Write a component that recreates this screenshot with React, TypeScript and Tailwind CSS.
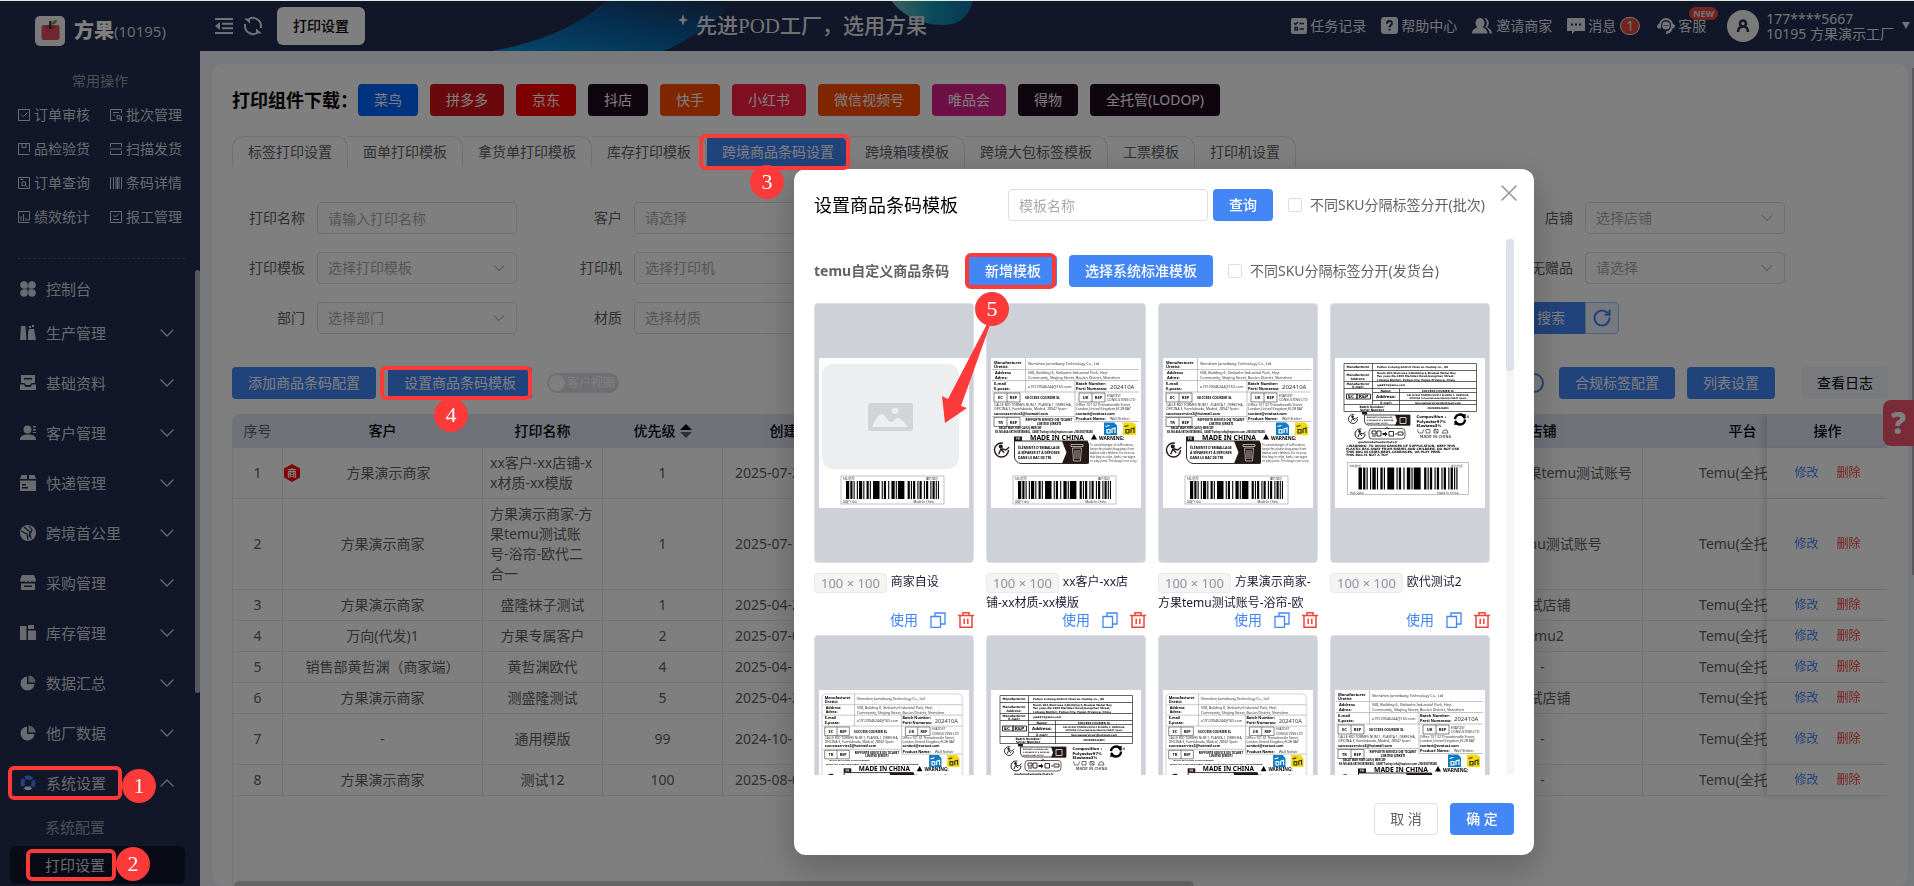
import React from 'react'
import { ChevronDown, ChevronUp, RotateCw, Search, X } from 'lucide-react'

type IconProps = { children: React.ReactNode; className?: string }

const Solid = ({ children, className = 'size-4' }: IconProps) => (
  <svg viewBox="0 0 16 16" fill="currentColor" className={className} aria-hidden="true">
    {children}
  </svg>
)

const Outline = ({ children, className = 'size-3' }: IconProps) => (
  <svg
    viewBox="0 0 12 12"
    fill="none"
    stroke="currentColor"
    strokeWidth="1"
    className={className}
    aria-hidden="true"
  >
    {children}
  </svg>
)

const shortcuts = [
  { name: '订单审核', icon: <path d="M.5.5h11v11H.5zM3 5.500l2.200 2.200L9.500 3.500" /> },
  { name: '批次管理', icon: <path d="M11.500 4V.5H.5v11H6M3 3.500h6M3 6h2M11.500 7v5M10 10.500l1.500 1M7 6.500h3v3.500H7z" /> },
  { name: '品检验货', icon: <path d="M11.500 9V.5H.5v11h11M4 .5V5l2-1 2 1V.5" /> },
  { name: '扫描发货', icon: <path d="M.5 4V.5h11V4M.5 8v3.500h11V8M0 6h12" /> },
  { name: '订单查询', icon: <path d="M.5.5h11v11H.5zM2.500 2.500h3M4 5h3.500v3.500H4zM7.500 8.500 9.500 10" /> },
  { name: '条码详情', icon: <path d="M.5 0v12M3.500 0v12M6 0v12M7.500 0v12M9 0v12M11.500 0v12" /> },
  { name: '绩效统计', icon: <path d="M11.500 9V.5H.5v11h11M3 10V5M5.500 10V3M8 10V7M10 10V8" /> },
  { name: '报工管理', icon: <path d="M.5.5h11v11H.5zM3.500 4l2 2 3.500-3.500M3 8.500h6" /> },
]

const pie = (
  <>
    <path d="M7 1.500A7 7 0 1 0 14.500 9H7z" />
    <path d="M8.500.5v7h7a7 7 0 0 0-7-7z" opacity=".8" />
  </>
)

const menu = [
  {
    name: '生产管理',
    icon: <path d="M1 1h4.500l1 14H0zM8 15V7l1-3h5l2 11zM9 1h2v2H9zM12 0h2v2h-2z" />,
  },
  {
    name: '基础资料',
    icon: <path d="M1 0h14v8h-3.500l-1.500 2H6L4.500 8H1zM4 3v1.500h8V3zM0 9.500h4L5.500 12h5L12 9.500h4V15H0z" fillRule="evenodd" />,
  },
  {
    name: '客户管理',
    icon: <path d="M3.500 4.500a4 4 0 1 1 8 0 4 4 0 0 1-8 0zM0 15c0-4 3-5.500 8-5.500s8 1.500 8 5.500zM13 1h3v1.500h-3zM13 4h3v1.500h-3zM13 7h3v1h-3z" />,
  },
  {
    name: '快递管理',
    icon: <path d="M1.500 0H7v4H0zM9 0h5.500L16 4H9zM0 5.500h16V16H0zM2 9v1.500h4V9zM2 12v1.500h6V12z" fillRule="evenodd" />,
  },
  {
    name: '跨境首公里',
    icon: (
      <>
        <circle cx="8" cy="8" r="8" />
        <path d="M1 6l6 3 1 6M4 2l6 5-1 5M9 1l3 4-2 4 1 5" fill="none" stroke="#222c50" strokeWidth="1.200" />
      </>
    ),
  },
  {
    name: '采购管理',
    icon: <path d="M2 0h12l2 5c0 2-3 2.500-4 1-1 1.500-3 1.500-4 0-1 1.500-3 1.500-4 0-1 1.500-4 1-4-1zM1 8.500h14V15H1zM4 10.500V12h8v-1.500z" fillRule="evenodd" />,
  },
  {
    name: '库存管理',
    icon: <path d="M0 1h6.500v14H0zM8 0h6v4H8zM8 5.500h8V15H8z" />,
  },
  { name: '数据汇总', icon: pie },
  { name: '他厂数据', icon: pie },
]

const downloads = [
  { name: '菜鸟', color: 'bg-[#0066ff]' },
  { name: '拼多多', color: 'bg-[#d4131b]' },
  { name: '京东', color: 'bg-[#fa0000]' },
  { name: '抖店', color: 'bg-[#1f0a1c]' },
  { name: '快手', color: 'bg-[#ff4a00]' },
  { name: '小红书', color: 'bg-[#ff2142]' },
  { name: '微信视频号', color: 'bg-[#ff4a00]' },
  { name: '唯品会', color: 'bg-[#d9208a]' },
  { name: '得物', color: 'bg-[#1f0a1c]' },
  { name: '全托管(LODOP)', color: 'bg-[#1f0a1c]' },
]

const tabs = [
  '标签打印设置',
  '面单打印模板',
  '拿货单打印模板',
  '库存打印模板',
  '跨境商品条码设置',
  '跨境箱唛模板',
  '跨境大包标签模板',
  '工票模板',
  '打印机设置',
]

const rows = [
  { customer: '方果演示商家', name: 'xx客户-xx店铺-xx材质-xx模版', level: 1, date: '2025-07-21 10:15', shop: '方果演示-方果temu测试账号', merchant: true },
  { customer: '方果演示商家', name: '方果演示商家-方果temu测试账号-浴帘-欧代二合一', level: 1, date: '2025-07-18 16:02', shop: '方果temu测试账号' },
  { customer: '方果演示商家', name: '盛隆袜子测试', level: 1, date: '2025-04-22 09:40', shop: '测试店铺' },
  { customer: '万向(代发)1', name: '方果专属客户', level: 2, date: '2025-07-03 14:21', shop: 'temu2' },
  { customer: '销售部黄哲渊（商家端）', name: '黄哲渊欧代', level: 4, date: '2025-04-16 11:33', shop: '-' },
  { customer: '方果演示商家', name: '测盛隆测试', level: 5, date: '2025-04-22 09:52', shop: '测试店铺' },
  { customer: '-', name: '通用模版', level: 99, date: '2024-10-12 17:08', shop: '-', material: '通用材质通用材质通用材质通用材质' },
  { customer: '方果演示商家', name: '测试12', level: 100, date: '2025-08-01 15:45', shop: '-' },
]

// Numbered step marker drawn above the dimmed page
const Step = ({ n, className }: { n: number; className: string }) => (
  <span
    className={`absolute z-50 flex size-[34px] items-center justify-center rounded-full bg-[#fc3a3a] font-['Liberation_Serif',serif] text-[22px] leading-none text-white ${className}`}
  >
    {n}
  </span>
)

const Frame = ({ className }: { className: string }) => (
  <span
    className={`pointer-events-none absolute z-50 rounded-md border-4 border-[#fc3a3a] ${className}`}
  />
)

const Sidebar = () => (
  <aside className="relative flex w-[200px] shrink-0 flex-col bg-[#222c50] pt-4 text-[#d3d6de]">
    <div className="flex h-[30px] items-center pl-[35px]">
      <svg viewBox="0 0 30 30" className="size-[30px]" aria-hidden="true">
        <rect width="30" height="30" rx="5" fill="#f5f5f5" />
        <rect x="6.500" y="9" width="18" height="15" rx="2" fill="#e34f63" />
        <path d="M11 9.500h9v3h-9z" fill="#b93c4d" />
        <path d="M14.200 5h2.200v8h-2.200z" fill="#2b2b35" />
        <path d="M16.500 8.500c0-3 2.500-4.500 5.500-4.500 0 3-2 4.500-5.500 4.500z" fill="#5fae43" />
      </svg>
      <span className="ml-[9px] text-xl font-black text-white">方果</span>
      <span className="text-[15px]">(10195)</span>
    </div>
    <h2 className="mt-[25px] text-center text-sm leading-5 text-[#9b9fab]">常用操作</h2>
    <div className="mt-[7px] grid grid-cols-2 gap-x-[14px] pl-[18px] pr-[12px]">
      {shortcuts.map((item) => (
        <a key={item.name} href="#" className="flex h-[34px] items-center gap-1 whitespace-nowrap text-sm">
          <Outline>{item.icon}</Outline>
          {item.name}
        </a>
      ))}
    </div>
    <div className="mr-[15px] ml-[18px] mt-6 border-t border-dashed border-[#4b5372]" />
    <nav className="mt-[11px] text-[15px]">
      <a href="#" className="flex h-[38px] items-center gap-[10px] pl-5">
        <Solid>
          <circle cx="4" cy="4" r="3.800" />
          <circle cx="12" cy="4" r="3.800" />
          <circle cx="4" cy="12" r="3.800" />
          <circle cx="12" cy="12" r="3.800" />
          <path d="M4 4h3.500v3.500H4zM8.500 4H12v3.500H8.500zM4 8.500h3.500V12H4zM8.500 8.500H12V12H8.500z" />
        </Solid>
        控制台
      </a>
      {menu.map((item) => (
        <a key={item.name} href="#" className="flex h-[50px] items-center gap-[10px] pl-5 pr-[21px]">
          <Solid>{item.icon}</Solid>
          <span className="flex-1">{item.name}</span>
          <ChevronDown className="size-6" strokeWidth={1.25} />
        </a>
      ))}
      <a href="#" className="relative flex h-[50px] items-center gap-[10px] pl-5 pr-[21px]">
        <svg viewBox="0 0 16 16" className="size-4" fill="none" strokeWidth="4" aria-hidden="true">
          <circle cx="8" cy="8" r="5.500" stroke="#4386f6" strokeDasharray="7.200 1.440" strokeDashoffset="3.600" />
          <path d="M5 12.500a5.500 5.500 0 0 0 6 0" stroke="#e8eaf0" strokeWidth="3" />
        </svg>
        <span className="flex-1">系统设置</span>
        <ChevronUp className="size-6" strokeWidth={1.25} />
        <Frame className="left-2 top-2 h-[34px] w-[114px]" />
        <Step n={1} className="left-[122px] top-[11px]" />
      </a>
      <a href="#" className="flex h-[38px] items-center pl-[45px] text-[#9b9fab]">
        系统配置
      </a>
      <a
        href="#"
        className="relative ml-[10px] mr-[15px] flex h-[38px] items-center rounded-md bg-[#11152a] pl-[35px]"
      >
        打印设置
        <Frame className="left-4 top-[3px] h-[32px] w-[90px]" />
        <Step n={2} className="left-[106px] top-px" />
      </a>
    </nav>
    <div className="absolute right-0 top-[270px] h-[423px] w-[5px] rounded-full bg-[#b0b2ba]" />
  </aside>
)

const Header = () => (
  <header className="relative flex h-[51px] shrink-0 items-center bg-[#222c50] pl-[15px] pr-1 text-sm text-[#e4e6ec]">
    <svg viewBox="0 0 800 51" className="absolute left-[280px] top-0 h-[51px] w-[800px]" aria-hidden="true">
      <defs>
        <linearGradient id="swoosh" x1="0" y1="1" x2="1" y2="0">
          <stop offset="0" stopColor="#0a8fd8" />
          <stop offset=".55" stopColor="#0a5c9c" />
          <stop offset="1" stopColor="#222c50" />
        </linearGradient>
        <linearGradient id="blob" x1="0" y1="0" x2="1" y2="0">
          <stop offset="0" stopColor="#78c4cc" />
          <stop offset=".5" stopColor="#1498b4" />
          <stop offset="1" stopColor="#1070ac" />
        </linearGradient>
      </defs>
      <path d="M12 51C60 42 95 28 128 0h130c-20 18-40 36-74 51z" fill="url(#swoosh)" />
      <path d="M411 0c8 12 26 25 52 25 22 0 28-16 30-25z" fill="url(#blob)" />
      <path d="M203 14l1.500 4.500L208 20l-3.500 1.500L203 26l-1.500-4.500L198 20l3.500-1.500z" fill="#e4e6ec" />
    </svg>
    <button aria-label="收起菜单">
      <svg viewBox="0 0 18 16" fill="currentColor" className="h-4 w-[18px]" aria-hidden="true">
        <path d="M0 0h18v2H0zM7 4.700h11v2H7zM7 9.300h11v2H7zM0 14h18v2H0zM5 4v8L0 8z" />
      </svg>
    </button>
    <button aria-label="刷新" className="ml-[10px]">
      <svg viewBox="0 0 20 20" fill="none" stroke="currentColor" strokeWidth="2" className="size-5" aria-hidden="true">
        <path d="M6 3a8 8 0 0 1 12 7v2M14 17A8 8 0 0 1 2 10V8" />
        <path d="M1 2.500h6v5zM19 17.500h-6v-5z" fill="currentColor" stroke="none" />
      </svg>
    </button>
    <button className="ml-[14px] h-[38px] rounded-md bg-white px-4 text-sm font-medium text-black">
      打印设置
    </button>
    <p className="relative ml-[331px] mr-auto whitespace-nowrap font-['Liberation_Serif','Noto_Sans_CJK_SC',serif] text-[21px] font-medium">
      先进POD工厂，选用方果
    </p>
    <div className="relative flex shrink-0 items-center whitespace-nowrap">
      <a href="#" className="mr-[15px] flex items-center gap-[3px]">
        <Solid>
          <path d="M2 0h12a2 2 0 0 1 2 2v12a2 2 0 0 1-2 2H2a2 2 0 0 1-2-2V2a2 2 0 0 1 2-2z" />
          <path d="M3 5l1.500 1.500L7 4M8.500 5.500H13M8.500 11H13M4 9.500h2.500V12H4z" fill="none" stroke="#222c50" strokeWidth="1.300" />
        </Solid>
        任务记录
      </a>
      <a href="#" className="mr-[15px] flex items-center gap-[3px]">
        <Solid className="size-[17px]">
          <path d="M3 0h10a3 3 0 0 1 3 3v10a3 3 0 0 1-3 3H3a3 3 0 0 1-3-3V3a3 3 0 0 1 3-3z" />
          <path d="M5.700 6.300C5.700 3 10.300 3 10.300 6c0 1.600-2.300 1.800-2.300 3.600M8 11v1.800" fill="none" stroke="#222c50" strokeWidth="1.800" />
        </Solid>
        帮助中心
      </a>
      <a href="#" className="mr-[15px] flex items-center gap-1">
        <svg viewBox="0 0 20 16" fill="currentColor" className="h-4 w-5" aria-hidden="true">
          <path d="M8 0a4.500 5 0 0 0-4.500 5c0 2 .8 3.500 2 4.300C2.500 10.500 0 12 0 15.500h15.500c0-3.500-2.500-5-5-6.200 1.200-.8 2-2.300 2-4.300A4.500 5 0 0 0 8 0z" />
          <path d="M12 0c3 0 4.800 2 4.800 5 0 2-.8 3.300-2 4.200 3 1.300 5.200 3 5.200 6.300h-2.500c0-3-1.500-5-4.500-6.200 1.200-1.300 1.800-2.500 1.800-4.300 0-2-1-4-2.800-5z" />
        </svg>
        邀请商家
      </a>
      <a href="#" className="mr-[17px] flex items-center gap-[3px]">
        <svg viewBox="0 0 18 16" fill="currentColor" className="h-4 w-[18px]" aria-hidden="true">
          <path d="M1 0h16a1 1 0 0 1 1 1v12H8l-3 3v-3H0V1a1 1 0 0 1 1-1z" />
          <path d="M4 5.500h2v2H4zM8 5.500h2v2H8zM12 5.500h2v2h-2z" fill="#222c50" />
        </svg>
        消息
        <span className="ml-[1px] flex h-[18px] w-5 items-center justify-center rounded-full border border-[#e4e6ec] bg-[#e8483e] text-sm leading-none">
          1
        </span>
      </a>
      <a href="#" className="relative mr-[21px] flex items-center gap-[3px]">
        <svg viewBox="0 0 18 16" fill="currentColor" className="h-4 w-[18px]" aria-hidden="true">
          <path d="M9 0a7 7 0 0 0-7 6C1 6 0 6.700 0 8s1 2.500 2.500 2.500H4V7a5 5 0 0 1 10 0c0 4-2 6-5 6.500V16c4-.2 6-2.500 6.500-5.500C17 10.500 18 9.300 18 8s-1-2-2-2a7 7 0 0 0-7-6z" />
          <circle cx="9" cy="7.500" r="4" />
          <path d="M6.500 7.500h1M8.500 7.500h1M10.500 7.500h1" stroke="#222c50" />
        </svg>
        客服
        <span className="absolute -right-3 -top-[9px] rounded-full bg-[#e8483e] px-1 text-[9px] font-bold leading-[13px]">
          NEW
        </span>
      </a>
      <svg viewBox="0 0 32 32" className="size-8" aria-hidden="true">
        <circle cx="16" cy="16" r="16" fill="#f5f5f5" />
        <path d="M11 22c0-4 2-5.500 5-5.500s5 1.500 5 5.500M13 13.500a3 3 0 1 1 6 0 3 3 0 0 1-6 0z" fill="none" stroke="#222c50" strokeWidth="2.500" />
      </svg>
      <div className="ml-[7px] leading-[15px]">
        <div>177****5667</div>
        <div>10195&nbsp;方果演示工厂</div>
      </div>
      <span className="ml-2 border-x-[4px] border-t-[7px] border-x-transparent border-t-current" />
    </div>
  </header>
)

const Field = ({ label, placeholder, text }: { label: string; placeholder: string; text?: boolean }) => (
  <label className="flex w-[317px] items-center">
    <span className="w-[85px] shrink-0 whitespace-nowrap pr-3 text-right text-[#606266]">{label}</span>
    <span className="relative">
      {text ? (
        <input
          placeholder={placeholder}
          className="h-8 w-[200px] rounded border border-[#dcdfe6] px-[10px] placeholder:text-[#a8abb2]"
        />
      ) : (
        <>
          <select className="h-8 w-[200px] appearance-none rounded border border-[#dcdfe6] px-[10px] text-[#a8abb2]">
            <option>{placeholder}</option>
          </select>
          <ChevronDown
            className="pointer-events-none absolute right-2 top-[6px] size-5 text-[#a8abb2]"
            strokeWidth={1.25}
          />
        </>
      )}
    </span>
  </label>
)

const primary = 'h-8 whitespace-nowrap rounded bg-[#4386f6] px-4 text-white'

const Filters = () => (
  <form className="mt-[35px] w-[1585px] text-sm">
    <div className="flex flex-wrap gap-y-[18px]">
      <Field label="打印名称" placeholder="请输入打印名称" text />
      <Field label="客户" placeholder="请选择" />
      <Field label="平台" placeholder="请选择" />
      <Field label="系统" placeholder="请选择" />
      <Field label="店铺" placeholder="选择店铺" />
      <Field label="打印模板" placeholder="选择打印模板" />
      <Field label="打印机" placeholder="选择打印机" />
      <Field label="国家" placeholder="请选择" />
      <Field label="状态" placeholder="请选择" />
      <Field label="有无赠品" placeholder="请选择" />
      <Field label="部门" placeholder="选择部门" />
      <Field label="材质" placeholder="选择材质" />
      <Field label="商品" placeholder="请选择" />
      <div className="flex w-[436px] justify-end">
        <button type="button" className="flex h-8 items-center gap-[2px] rounded-l bg-[#4386f6] px-5 text-white">
          <Search className="size-4" />
          搜索
        </button>
        <button
          type="button"
          aria-label="重置"
          className="flex h-8 w-[34px] items-center justify-center rounded-r border border-[#a1c3fb] bg-[#ecf3fe] text-[#4386f6]"
        >
          <RotateCw className="size-5" strokeWidth={2.5} />
        </button>
      </div>
    </div>
  </form>
)

const Toolbar = () => (
  <div className="mt-[33px] flex items-center text-sm">
    <button className={primary}>添加商品条码配置</button>
    <div className="relative ml-3">
      <button className={primary}>设置商品条码模板</button>
      <Frame className="-left-2 -top-px h-[34px] w-[152px]" />
      <Step n={4} className="left-[46px] top-[31px]" />
    </div>
    <button
      role="switch"
      aria-checked="false"
      className="ml-[15px] flex h-5 w-[72px] items-center gap-[2px] rounded-full bg-[#dcdfe6] pl-[2px] text-xs text-white"
    >
      <span className="size-4 shrink-0 rounded-full bg-white" />
      客户视图
    </button>
    <button
      role="switch"
      aria-checked="false"
      aria-label="启用"
      className="ml-auto h-5 w-10 rounded-full border-2 border-[#4386f6]"
    />
    <button className={`ml-[15px] ${primary}`}>合规标签配置</button>
    <button className={`ml-3 ${primary}`}>列表设置</button>
    <button className="ml-[27px] h-8 rounded bg-[#f0f4fa] px-[15px] text-black">查看日志</button>
  </div>
)

const cell = 'border-b border-r border-[#e3e7f0] px-[5px] py-[5px]'

const TemplateTable = () => (
  <div className="relative mt-[15px] flex-1 overflow-hidden rounded-t-lg border-l border-[#e3e7f0]">
    <table className="w-[2856px] table-fixed border-separate border-spacing-0 text-center text-sm leading-5 text-[#606266]">
      <colgroup>
        <col className="w-[50px]" />
        <col className="w-[200px]" />
        <col className="w-[120px]" />
        <col className="w-[120px]" />
        <col className="w-[150px]" />
        <col className="w-[170px]" />
        <col className="w-[200px]" />
        <col className="w-[200px]" />
        <col className="w-[200px]" />
        <col className="w-[200px]" />
        <col />
        <col className="w-[121px]" />
      </colgroup>
      <thead>
        <tr className="h-[34px] bg-[#dfe5f3] text-black">
          <th className={`${cell} font-normal text-[#606266]`}>序号</th>
          <th className={`${cell} font-medium`}>客户</th>
          <th className={`${cell} font-medium`}>打印名称</th>
          <th className={`${cell} font-medium`}>
            <span className="inline-flex items-center gap-1">
              优先级
              <svg viewBox="0 0 12 14" className="h-[14px] w-3" aria-hidden="true">
                <path d="M0 6l6-6 6 6z" fill="#000" />
                <path d="M0 8l6 6 6-6z" fill="#606266" />
              </svg>
            </span>
          </th>
          <th className={`${cell} font-medium`}>创建时间</th>
          <th className={`${cell} font-medium`}>材质</th>
          <th className={`${cell} font-medium`}>打印机</th>
          <th className={`${cell} font-medium`}>模板</th>
          <th className={`${cell} font-medium`}>店铺</th>
          <th className={`${cell} font-medium`}>平台</th>
          <th className={`${cell} font-medium`}>备注</th>
          <th className="sticky right-0 border-b border-[#e3e7f0] bg-[#dfe5f3] font-medium shadow-[-4px_0_6px_rgba(0,0,0,0.12)]">
            操作
          </th>
        </tr>
      </thead>
      <tbody>
        {rows.map((row, i) => (
          <tr key={i}>
            <td className={cell}>{i + 1}</td>
            <td className={`${cell} ${row.merchant ? 'pl-px' : ''}`}>
              <div className="flex items-center">
                {row.merchant && (
                  <svg viewBox="0 0 16 18" className="h-[18px] w-4" aria-label="商家">
                    <path d="M8 0l8 4.500v9L8 18l-8-4.500v-9z" fill="#ff0000" />
                    <text x="8" y="12.500" fontSize="10" fontWeight="700" fill="#fff" textAnchor="middle">
                      商
                    </text>
                  </svg>
                )}
                <span className="flex-1">{row.customer}</span>
              </div>
            </td>
            <td className={cell}>
              <div className="inline-block max-w-[105px] break-all text-left align-top">{row.name}</div>
            </td>
            <td className={cell}>{row.level}</td>
            <td className="whitespace-nowrap border-b border-r border-[#e3e7f0] pl-3 text-left">{row.date}</td>
            <td className={cell}>{row.material ?? '-'}</td>
            <td className={cell}>-</td>
            <td className={cell}>-</td>
            <td className={cell}>{row.shop}</td>
            <td className={cell}>Temu(全托管)</td>
            <td className={cell}>-</td>
            <td className="sticky right-0 border-b border-[#e3e7f0] bg-white text-xs shadow-[-4px_0_6px_rgba(0,0,0,0.12)]">
              <a href="#" className="mr-[18px] text-[#4386f6]">
                修改
              </a>
              <a href="#" className="text-[#f0443c]">
                删除
              </a>
            </td>
          </tr>
        ))}
      </tbody>
    </table>
    <div className="absolute bottom-0 left-px h-[5px] w-[58%] rounded-t-full bg-[#c9c9c9]" />
  </div>
)

// Bar widths of the sample barcode: bar, gap, bar, gap ...
const bars = [3, 1, 2, 1, 1, 2, 1, 1, 3, 1, 1, 2, 2, 1, 1, 2, 6, 2, 1, 1, 2, 2, 1, 2, 3, 1, 1, 1, 6, 3, 2, 1, 1, 1, 2, 2, 1, 1, 2, 2, 1, 1, 2, 2, 1, 1, 2, 1, 1, 1, 1]

const Barcode = ({ x, y, w, h, pad }: { x: number; y: number; w: number; h: number; pad: number }) => {
  const total = bars.reduce((a, b) => a + b, 0)
  const unit = (w - pad * 2) / total
  let at = x + pad
  return (
    <g>
      <rect x={x} y={y} width={w} height={h} fill="none" stroke="#999" strokeWidth=".6" />
      {bars.map((b, i) => {
        const left = at
        at += b * unit
        return i % 2 === 0 ? (
          <rect key={i} x={left} y={y + 5} width={b * unit} height={h - 10} fill="#000" />
        ) : null
      })}
      <g fontSize="3" fill="#333">
        <text x={x + 2} y={y + 4}>SKU货号</text>
        <text x={x + w - 6} y={y + 4} textAnchor="end">图片信息</text>
        <text x={x + 2} y={y + h - 1}>自定义sku</text>
        <text x={x + w - 10} y={y + h - 1} textAnchor="end">Made In China</text>
      </g>
    </g>
  )
}

const RepBox = ({ x, y, code }: { x: number; y: number; code: string }) => (
  <g fontSize="4" fontWeight="700" textAnchor="middle">
    <path d={`M${x} ${y}h26v9h-26zM${x + 13} ${y}v9`} fill="none" stroke="#333" strokeWidth=".6" />
    <text x={x + 6.5} y={y + 6}>{code}</text>
    <text x={x + 19.5} y={y + 6}>REP</text>
  </g>
)

const Triman = ({ x, y, r }: { x: number; y: number; r: number }) => (
  <g fill="none" stroke="#231815" strokeWidth={r / 5}>
    <circle cx={x} cy={y} r={r} strokeDasharray={`${r * 4.9} ${r * 1.4}`} />
    <circle cx={x - r * 0.1} cy={y - r * 0.5} r={r * 0.2} fill="#231815" />
    <path d={`M${x - r * 0.4} ${y + r * 0.6}l${r * 0.3} ${-r * 0.7}l${r * 0.5} ${r * 0.5}M${x} ${y - r * 0.2}l${r * 0.6} ${r * 0.2}l${r * 0.5} ${-r * 0.4}`} />
  </g>
)

const SuccessLabel = () => (
  <>
    <path d="M1 11.500h147M1 22.500h147M1 34h147M1 58.500h83M84 63.500h64M34.500 0v34M84 22.500v41" stroke="#aaa" strokeWidth=".7" />
    <g fontSize="4" fontWeight="700">
      <text x="3" y="5.500">Manufacturer</text>
      <text x="3" y="10">Üretici:</text>
      <text x="4" y="15.500">Address</text>
      <text x="4" y="20.500">Adres:</text>
      <text x="3" y="26.500">E-mail</text>
      <text x="3" y="31.500">E-posta:</text>
      <text x="85" y="27">Batch Number:</text>
      <text x="85" y="32">Parti Numarası:</text>
      <text x="34" y="41" fontSize="3.400">SUCCESS COURIER SL</text>
      <text x="3" y="56.500" fontSize="3.600">successservice2@hotmail.com</text>
      <text x="85" y="56.500" fontSize="3.600">contact@evatost.com</text>
      <text x="58" y="63" fontSize="3" textAnchor="middle">REPPORTR SERVICE DIŞ TICARET</text>
      <text x="58" y="67" fontSize="3" textAnchor="middle">LIMITED ŞIRKETI</text>
      <text x="85" y="62">Product Name:</text>
      <text x="8" y="71" fontSize="2.600">BALAT MAH.HIER CAVUŞ MERCIEF</text>
      <text x="4" y="75" fontSize="2.600">SK.NO:46A FATIH/ISTANBUL, 34087 Turkey info@reptorn.com +905303798280</text>
    </g>
    <g fontSize="3.700" fill="#333">
      <text x="37" y="7">Shenzhen Jumeibang Technology Co., Ltd</text>
      <text x="37" y="15.500">508, Building 6, Xinlianhe Industrial Park, Heyi</text>
      <text x="37" y="21">Community, Shajing Street, Bao&apos;an District, Shenzhen</text>
      <text x="37" y="30">a19129946244@163.com</text>
      <text x="119" y="31" fontSize="6">202410A</text>
      <text x="116" y="38.500" fontSize="3.400">EVATOST</text>
      <text x="116" y="43" fontSize="3.400">CONSULTING LTD</text>
      <text x="3" y="48" fontSize="3.400">CALLE RIO TORMES NUM.1, PLANTA 1, DERECHA,</text>
      <text x="3" y="52.300" fontSize="3.400">OFICINA 3, Fuenlabrada, Madrid, 28947 Spain</text>
      <text x="85" y="48" fontSize="3.400">Office 101 32 Threadneedle Street,</text>
      <text x="85" y="52.300" fontSize="3.400">London,United Kingdom,EC2R 8AY</text>
      <text x="119" y="62">Wall Sticker</text>
    </g>
    <RepBox x={3} y={35} code="EC" />
    <RepBox x={88} y={35} code="UK" />
    <RepBox x={3} y={59.5} code="TR" />
    <path d="M113 64.500h10l3 3V77h-13z" fill="#0c7cc4" />
    <path d="M132 64.500h10l3 3V77h-13z" fill="#f5d908" />
    <g fill="none" strokeWidth="1.200">
      <path d="M114.500 68.500l4-1M116 71.500h3V75h-3zM121 75v-4l3-1v5" stroke="#fff" />
      <path d="M133.500 68.500l4-1M135 71.500h3V75h-3zM140 75v-4l3-1v5" stroke="#333" />
    </g>
    <text x="39" y="81.500" fontSize="6.800" fontWeight="700">MADE IN CHINA</text>
    <path d="M100 81.500l3-5.500 3 5.500z" />
    <text x="108" y="81.500" fontSize="4.800" fontWeight="700">WARNING:</text>
    <Triman x={10.5} y={92} r={7} />
    <path d="M23.500 83h73v22.500H30a7 7 0 0 1-6.500-6.500z" fill="#fff" stroke="#231815" strokeWidth=".9" />
    <rect x="23" y="78.500" width="8" height="4.500" fill="#231815" />
    <text x="27" y="82" fontSize="3.500" fill="#fff" textAnchor="middle">FR</text>
    <path d="M71 83h23a4 4 0 0 1 4 4v18.500H71l4.500-11z" fill="#231815" />
    <path d="M80 86.500h12v2H80zM81.500 90h9l-1 13h-7zM84 92v9M86 92v9M88 92v9" fill="none" stroke="#cfc8c4" strokeWidth=".8" />
    <g fontSize="3.400" fontWeight="700">
      <text x="27" y="90.500">ÉLÉMENTS D&apos;EMBALLAGE</text>
      <text x="27" y="95.500">À SÉPARER ET À DÉPOSER</text>
      <text x="27" y="100.500">DANS LE BAC DE TRI</text>
    </g>
    <g fontSize="3" fill="#333">
      <text x="99" y="87.500">To avoid danger of suffocation,</text>
      <text x="99" y="91.500">keep this plastic bag away from</text>
      <text x="99" y="95.500">babies and children. Do not use</text>
      <text x="99" y="99.500">this bag in cribs, beds, carriages</text>
      <text x="99" y="103.500">or play pens. This bag is not a toy.</text>
    </g>
    <Barcode x={22} y={118} w={103} h={28} pad={5} />
  </>
)

const PutianLabel = () => (
  <g fontFamily="'DejaVu Sans', sans-serif">
    <path
      d="M9 5.500h132.500v48H9zM9 12.500h132.500M9 23.500h132.500M9 30.500h132.500M37.500 34.500h104M37.500 42.500h104M9 46.500h132.500M37.500 5.500v41M64.500 30.500v23"
      fill="none"
      stroke="#222"
      strokeWidth=".7"
    />
    <g fontSize="3" fontWeight="700" textAnchor="middle">
      <text x="23" y="10">Manufacturer</text>
      <text x="23" y="17.500">Manufacturer</text>
      <text x="23" y="21.500">Address:</text>
      <text x="23" y="26.500">Manufacturer</text>
      <text x="23" y="29.800">E-mail:</text>
      <text x="51" y="33.800">Name:</text>
      <text x="51" y="40" fontSize="4">Address:</text>
      <text x="51" y="45.800">E-mail:</text>
      <text x="37" y="49.800">Batch Number/</text>
      <text x="37" y="53">Serial Number</text>
      <text x="103" y="33.800" fontSize="2.700">SUCCESS COURIER SL</text>
      <text x="103" y="38" fontSize="2.300">CALLE RIO TORMES NUM.1 PLANTA 1, DERECHA,</text>
      <text x="103" y="41.300" fontSize="2.300">OFICINA 3,Fuenlabrada,Madrid,28947 Spain</text>
      <text x="103" y="45.500" fontSize="2.700">Successservice2@hotmail.com</text>
      <text x="103" y="51" fontSize="2.700">2024030-0401</text>
    </g>
    <g fontSize="2.700" fontWeight="700">
      <text x="42" y="10">Putian Licheng district Chen&apos;an trading co., ltd</text>
      <text x="42" y="15.800">Room 203,Staircase 2,Building 3,Shadow Water Bay</text>
      <text x="42" y="19.200">Tao yuan,No.1899 Meridian Road,Gongchen Street,</text>
      <text x="42" y="22.600">Licheng District, Putian City, Fujian Province, China</text>
      <text x="42" y="28">aje8613@sina.com</text>
    </g>
    <path d="M11.500 36h10.500v5H11.500zM22 36h13.500v5H22z" fill="none" stroke="#000" strokeWidth=".8" />
    <text x="13" y="40.200" fontSize="4.500" fontWeight="700">EC</text>
    <text x="23.500" y="40.200" fontSize="4.500" fontWeight="700">REP</text>
    <Triman x={18} y={61} r={4.5} />
    <Triman x={25} y={76} r={5} />
    <path d="M29.500 57H75v10H33a4 4 0 0 1-3.500-4z" fill="#fff" stroke="#231815" strokeWidth=".8" />
    <path d="M60 57h15v10.500H60l2-5z" fill="#231815" />
    <path d="M65 59.500h6v6h-6zM26.500 54.500h5" fill="none" stroke="#cfc8c4" />
    <rect x="27" y="54" width="5" height="2.500" fill="#231815" />
    <g fontSize="1.800" fontWeight="700">
      <text x="32" y="60.300">ÉLÉMENTS D&apos;EMBALLAGE</text>
      <text x="32" y="63">À SÉPARER ET À DÉPOSER</text>
      <text x="32" y="65.700">DANS LE BAC DE TRI</text>
    </g>
    <rect x="34" y="70.500" width="36" height="10.500" rx="3" fill="none" stroke="#231815" strokeWidth=".7" />
    <path d="M37 73h4v3h-4zM42 73h4v5h-4zM37 78h4M60 76h2M54 73.500h4.500v4.500H54zM63 74h5v3h-5zM50 71l2-1.500 2 1.500" fill="none" stroke="#231815" strokeWidth=".9" />
    <path d="M47.500 75h2.500v-1.500l2.500 2.500-2.500 2.500V77h-2.500z" fill="#231815" />
    <text x="23" y="85" fontSize="2.800" fontWeight="700">quefairedemesdechets.fr</text>
    <g fontSize="3.800" fontWeight="700">
      <text x="81.500" y="59.500">Composition :</text>
      <text x="81.500" y="64.500">Polyester97%</text>
      <text x="81.500" y="69">Elastane3%</text>
    </g>
    <text x="85" y="79.800" fontSize="4">MADE IN CHINA</text>
    <path d="M82.500 71.500l1 3.500h4l1-3.500M91 71.500h4v3.500h-4zM99 71.500h4v3.500h-4zM99 71.500l4 3.500M107 75l2-3h3l1 3z" fill="none" stroke="#333" strokeWidth=".7" />
    <circle cx="125" cy="61.500" r="5" fill="none" stroke="#000" strokeWidth="2.400" strokeDasharray="13.700 2" />
    <path d="M126 57l5-1-1.500 5zM124 66l-5 1 1.500-5z" />
    <text x="131" y="59.500" fontSize="3.500">®</text>
    <g fontSize="3.200" fontWeight="700">
      <text x="11" y="88.500">⚠WARNING: TO AVOID DANGER OF SUFFOCATION, KEEP THIS</text>
      <text x="11" y="91.500">PLASTIC BAG AWAY FROM BABIES AND CHILDREN. DO NOT USE</text>
      <text x="11" y="94.500">THIS BAG IN CRIBS,BEDS,CARRIAGES, OR PLAY PENS.</text>
      <text x="11" y="97.500">THIS BAG IS NOT A TOY</text>
    </g>
    <Barcode x={12.5} y={104.5} w={121} h={32} pad={11} />
  </g>
)

const BlankLabel = () => (
  <>
    <rect x="3" y="6" width="137" height="105" rx="11" fill="#edeef0" />
    <rect x="49" y="45" width="45" height="28" rx="2" fill="#d1d4d9" />
    <path d="M53 69c3-7 7-13 10-13s6 8 9 8 4-4 6-4 7 3 11 9z" fill="#edeef0" />
    <ellipse cx="76" cy="53" rx="3.500" ry="3" fill="#edeef0" />
    <Barcode x={22} y={118} w={103} h={28} pad={5} />
  </>
)

const LabelPicture = ({ kind }: { kind: string }) => (
  <svg
    viewBox={kind === 'inset' ? '-3 -4 158 158' : '0 0 150 150'}
    className="size-[150px] bg-white"
    fontFamily="'Noto Sans', 'Noto Sans CJK SC', sans-serif"
    aria-hidden="true"
  >
    {kind === 'blank' && <BlankLabel />}
    {kind === 'putian' && <PutianLabel />}
    {kind === 'inset' && (
      <>
        <rect x="0" y="0" width="148" height="158" rx="5" fill="#fff" stroke="#e6e6e6" strokeWidth="2" />
        <SuccessLabel />
      </>
    )}
    {kind === 'success' && <SuccessLabel />}
  </svg>
)

const templates = [
  { name: '商家自设', kind: 'blank' },
  { name: 'xx客户-xx店铺-xx材质-xx模版', kind: 'success' },
  { name: '方果演示商家-方果temu测试账号-浴帘-欧代二合一', kind: 'success' },
  { name: '欧代测试2', kind: 'putian' },
  { name: '盛隆袜子测试', kind: 'inset' },
  { name: '方果专属客户', kind: 'putian' },
  { name: '黄哲渊欧代', kind: 'inset' },
  { name: '测盛隆测试', kind: 'success' },
]

const TemplateCard = ({ name, kind }: { name: string; kind: string }) => (
  <article className="w-40">
    <div className="flex h-[260px] items-center justify-center rounded border border-[#dcdfe6] bg-[#ced2d8]">
      <LabelPicture kind={kind} />
    </div>
    <p className="mt-[9px] h-[38px] overflow-hidden break-all pr-1 text-xs leading-5 text-[#1a1a33]">
      <span className="mr-1 inline-block h-5 rounded border border-[#e9e9eb] bg-[#f4f4f5] px-[6px] align-middle text-[13px] leading-[18px] text-[#909399]">
        100 × 100
      </span>
      {name}
    </p>
    <div className="flex h-[25px] items-start justify-end gap-3 text-sm leading-5 text-[#4386f6]">
      <button>使用</button>
      <button aria-label="复制" className="py-[2px]">
        <svg viewBox="0 0 16 16" fill="none" stroke="currentColor" strokeWidth="1.300" className="size-4" aria-hidden="true">
          <path d="M1 4.500h9.500v11H1zM5 4.500V1h10v11h-4.500" />
        </svg>
      </button>
      <button aria-label="删除" className="py-[2px] text-[#ee4438]">
        <svg viewBox="0 0 16 16" fill="none" stroke="currentColor" strokeWidth="1.500" className="size-4" aria-hidden="true">
          <path d="M0 3.500h16M5 3.500V.8h6v2.700M2 3.500v11.700h12V3.500M6.200 6.500v5.500M9.800 6.500v5.500" />
        </svg>
      </button>
    </div>
  </article>
)

const Check = ({ label }: { label: string }) => (
  <label className="ml-[15px] flex items-center gap-2 whitespace-nowrap text-sm text-[#606266]">
    <input type="checkbox" className="size-[14px] appearance-none rounded-xs border border-[#dcdfe6] bg-white" />
    {label}
  </label>
)

const TemplateDialog = () => (
  <div className="fixed inset-0 z-40 flex items-start justify-center bg-black/50 pl-[414px] pt-[169px]">
    <section
      role="dialog"
      aria-label="设置商品条码模板"
      className="relative w-[740px] rounded-xl bg-white p-5 shadow-[0_12px_32px_4px_rgba(0,0,0,0.2)]"
    >
      <div className="flex items-center text-sm">
        <h2 className="w-[194px] text-lg text-black">设置商品条码模板</h2>
        <input
          aria-label="模板名称"
          placeholder="模板名称"
          className="h-8 w-[200px] rounded border border-[#dcdfe6] px-[10px] placeholder:text-[#a8abb2]"
        />
        <button className={`ml-[5px] ${primary} font-medium`}>查询</button>
        <Check label="不同SKU分隔标签分开(批次)" />
      </div>
      <button aria-label="关闭" className="absolute right-[11px] top-[10px] text-[#909399]">
        <X className="size-7" strokeWidth={1.25} />
      </button>

      <div className="relative mt-[18px] h-[536px]">
        <div className="h-full overflow-hidden">
          <div className="flex items-center pt-4 text-sm">
            <span className="mr-auto font-bold text-[#606266]">temu自定义商品条码</span>
            <button className={`${primary} font-medium`}>新增模板</button>
            <button className={`ml-3 ${primary} font-medium`}>选择系统标准模板</button>
            <div className="w-[301px]">
              <Check label="不同SKU分隔标签分开(发货台)" />
            </div>
          </div>
          <div className="mt-4 grid grid-cols-[repeat(4,160px)] gap-x-3">
            {templates.map((item) => (
              <TemplateCard key={item.name} {...item} />
            ))}
          </div>
        </div>
        <div className="absolute right-0 top-0 h-full w-2 bg-[#f5f5f5]">
          <div className="h-[132px] rounded-full bg-[#dde1ea]" />
        </div>
        <Frame className="left-[151px] top-[14px] h-9 w-[91px]" />
        <Step n={5} className="left-[161px] top-[53px]" />
        <svg viewBox="0 0 50 100" className="absolute left-[127px] top-[85px] h-[100px] w-[50px]" fill="#fc3a3a" aria-hidden="true">
          <path d="M46 0l3 1-29 81 6 2-22 15-3-27 6 3z" />
        </svg>
      </div>

      <div className="mt-7 flex justify-end gap-3 text-sm">
        <button className="h-8 w-16 rounded border border-[#dcdfe6] text-[#606266]">取 消</button>
        <button className="h-8 w-16 rounded bg-[#4386f6] font-medium text-white">确 定</button>
      </div>
    </section>
  </div>
)

export default function App() {
  return (
    <div className="flex h-screen overflow-hidden bg-[#f0f2f8] font-['Noto_Sans','Noto_Sans_CJK_SC',sans-serif]">
      <div className="absolute inset-x-0 top-0 z-50 h-px bg-[#dfeade]" />
      <Sidebar />
      <div className="flex min-w-0 flex-1 flex-col">
        <Header />
        <main className="mt-[13px] ml-3 mr-[6px] flex min-h-0 flex-1 flex-col rounded-xl bg-white px-5 pt-5">
          <div className="flex items-center gap-3 text-sm">
            <h1 className="-mr-3 text-lg font-bold text-black">打印组件下载：</h1>
            {downloads.map((item) => (
              <button key={item.name} className={`h-8 whitespace-nowrap rounded px-4 text-white ${item.color}`}>
                {item.name}
              </button>
            ))}
          </div>
          <div role="tablist" className="mt-5 flex text-sm text-[#606266]">
            {tabs.map((name, i) => (
              <div key={name} className="relative">
                <button
                  role="tab"
                  aria-selected={i === 4}
                  className={`h-[31px] whitespace-nowrap rounded-tr-xl border-r border-t border-[#dcdfe6] px-[15px] ${
                    i === 0 ? 'rounded-tl-xl border-l' : ''
                  } ${i === 4 ? 'bg-[#4386f6] text-white' : ''}`}
                >
                  {name}
                </button>
                {i === 4 && (
                  <>
                    <Frame className="-left-2 -top-[2px] h-9 w-[151px]" />
                    <Step n={3} className="left-[43px] top-[29px]" />
                  </>
                )}
              </div>
            ))}
          </div>
          <Filters />
          <Toolbar />
          <TemplateTable />
        </main>
      </div>
      <div className="absolute right-0 top-[68px] h-[507px] w-[2px] bg-[#b4b4b8]" />
      <button
        aria-label="帮助"
        className="absolute right-0 top-[400px] h-[46px] w-[31px] rounded-l-lg bg-[#f4566e] text-3xl font-black leading-none text-white"
      >
        ?
      </button>
      <TemplateDialog />
    </div>
  )
}
